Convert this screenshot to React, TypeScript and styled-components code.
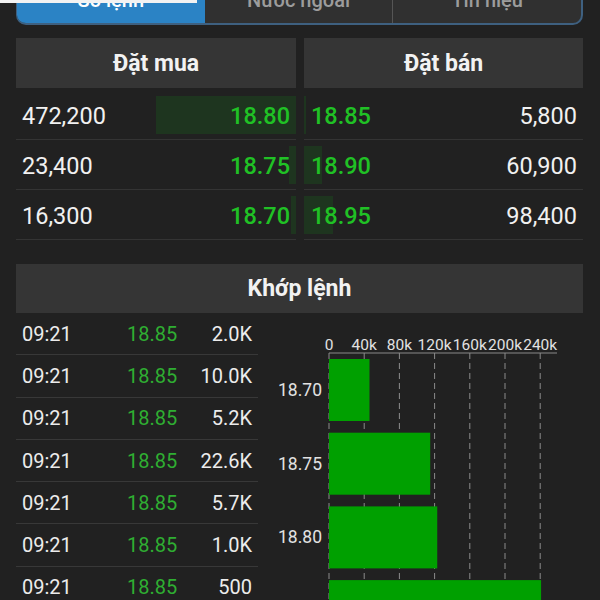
import React from "react";
import styled, { createGlobalStyle } from "styled-components";

const GlobalStyle = createGlobalStyle`
  html, body {
    margin: 0;
    padding: 0;
    background: #212121;
  }
  body {
    font-family: Roboto, "Noto Sans", "Liberation Sans", sans-serif;
    color: #eeeeee;
  }
  * { box-sizing: border-box; }
`;

const Page = styled.div`
  position: relative;
  width: 600px;
  height: 600px;
  overflow: hidden;
  padding: 0 17px 0 16px;
  display: flex;
  flex-direction: column;
  background: #212121;
`;

const TopProgress = styled.div`
  position: absolute;
  top: 0;
  left: 0;
  width: 197px;
  height: 3px;
  background: #f2f2f2;
  z-index: 3;
`;

const TabBar = styled.div`
  margin-top: -25px;
  height: 50px;
  flex-shrink: 0;
  display: flex;
  background: #303030;
  border: 2px solid #3e6080;
  border-top: none;
  border-left-width: 1px;
  border-radius: 0 0 10px 10px;
  overflow: hidden;
`;

const Tab = styled.div<{ $active?: boolean; $divider?: boolean }>`
  flex: 1;
  display: flex;
  align-items: center;
  justify-content: center;
  padding-top: 2px;
  font-size: 20px;
  font-weight: 500;
  color: ${(p) => (p.$active ? "#ffffff" : "#9c9c9c")};
  background: ${(p) => (p.$active ? "#2b83c5" : "transparent")};
  border-left: ${(p) => (p.$divider ? "1px solid #555" : "none")};
`;

const OrderBook = styled.div`
  margin-top: 13px;
  display: grid;
  grid-template-columns: 280px 1fr;
  column-gap: 8px;
  flex-shrink: 0;
`;

const BookColumn = styled.div`
  display: flex;
  flex-direction: column;
`;

const SectionHeader = styled.div<{ $height?: number }>`
  height: ${(p) => p.$height ?? 50}px;
  flex-shrink: 0;
  display: flex;
  align-items: center;
  justify-content: center;
  background: #353535;
  color: #f2f2f2;
  font-size: 23px;
  font-weight: 700;
`;

const BookRows = styled.div`
  margin-top: 2px;
  display: flex;
  flex-direction: column;
`;

const BookRow = styled.div<{ $side: "buy" | "sell" }>`
  position: relative;
  height: 50px;
  display: flex;
  align-items: center;
  justify-content: space-between;
  padding: ${(p) => (p.$side === "buy" ? "2px 6px 0 6px" : "2px 6px 0 7px")};
  border-bottom: 1px solid #343434;
  font-size: 23.5px;
`;

const DepthBar = styled.div<{ $side: "buy" | "sell" }>`
  position: absolute;
  top: 6px;
  bottom: 5px;
  ${(p) => (p.$side === "buy" ? "right: 0;" : "left: 0;")}
  background: #1e351f;
  z-index: 0;
`;

const Volume = styled.span`
  position: relative;
  z-index: 1;
  color: #f1f1f1;
  font-weight: 400;
`;

const Price = styled.span`
  position: relative;
  z-index: 1;
  color: #20c125;
  font-weight: 500;
`;

const MatchSection = styled.div`
  margin-top: 24px;
  display: flex;
  flex-direction: column;
  flex: 1;
  min-height: 0;
`;

const MatchBody = styled.div`
  display: flex;
  flex: 1;
  min-height: 0;
`;

const TradeList = styled.div`
  width: 242px;
  flex-shrink: 0;
  display: flex;
  flex-direction: column;
`;

const TradeRow = styled.div`
  height: 42.3px;
  flex-shrink: 0;
  display: grid;
  grid-template-columns: 105px auto 1fr;
  align-items: center;
  padding: 0 6px 0 6px;
  border-bottom: 1px solid #383838;
  font-size: 20px;
`;

const TradeTime = styled.span`
  color: #ececec;
`;

const TradePrice = styled.span`
  color: #2fae32;
`;

const TradeVol = styled.span`
  color: #ececec;
  text-align: right;
`;

const ChartSvg = styled.svg`
  display: block;
  flex-shrink: 0;
  font-family: Roboto, "Noto Sans", sans-serif;
`;

const buys = [
  { vol: 472200, price: "18.80" },
  { vol: 23400, price: "18.75" },
  { vol: 16300, price: "18.70" },
];
const sells = [
  { vol: 5800, price: "18.85" },
  { vol: 60900, price: "18.90" },
  { vol: 98400, price: "18.95" },
];
const maxVol = Math.max(...buys.map((b) => b.vol), ...sells.map((s) => s.vol));

const trades = [
  { t: "09:21", p: "18.85", v: "2.0K" },
  { t: "09:21", p: "18.85", v: "10.0K" },
  { t: "09:21", p: "18.85", v: "5.2K" },
  { t: "09:21", p: "18.85", v: "22.6K" },
  { t: "09:21", p: "18.85", v: "5.7K" },
  { t: "09:21", p: "18.85", v: "1.0K" },
  { t: "09:21", p: "18.85", v: "500" },
];

const chartBars = [
  { label: "18.70", vol: 46000 },
  { label: "18.75", vol: 115000 },
  { label: "18.80", vol: 123000 },
  { label: "18.85", vol: 241000 },
];

const fmt = (n: number) => n.toLocaleString("en-US");

function VolumeChart() {
  const x0 = 71;
  const step = 35.2;
  const pxPerUnit = step / 40000;
  const axisY = 40;
  const ticks = [0, 40, 80, 120, 160, 200, 240];
  const bandTop = 46;
  const band = 73.7;
  const barH = 62;
  return (
    <ChartSvg width={325} height={300} viewBox="0 0 325 300">
      {ticks.map((t, i) => (
        <text
          key={`l${t}`}
          x={x0 + i * step}
          y={37}
          fill="#e2e2e2"
          fontSize={15.5}
          textAnchor="middle"
        >
          {t === 0 ? "0" : `${t}k`}
        </text>
      ))}
      <line x1={x0} y1={axisY} x2={x0 + 228} y2={axisY} stroke="#8a8a8a" strokeWidth={1} />
      {ticks.map((t, i) => (
        <line
          key={`g${t}`}
          x1={x0 + i * step}
          y1={axisY}
          x2={x0 + i * step}
          y2={300}
          stroke="#8c8c8c"
          strokeWidth={1}
          strokeDasharray="6 4"
        />
      ))}
      {chartBars.map((b, i) => {
        const y = bandTop + i * band;
        return (
          <g key={b.label}>
            <rect x={x0} y={y} width={b.vol * pxPerUnit} height={barH} fill="#00a000" />
            <text
              x={64}
              y={y + barH / 2 + 6}
              fill="#e2e2e2"
              fontSize={17.5}
              textAnchor="end"
            >
              {b.label}
            </text>
          </g>
        );
      })}
    </ChartSvg>
  );
}

export default function App() {
  return (
    <>
      <GlobalStyle />
      <Page>
        <TopProgress />
        <TabBar>
          <Tab $active>Sổ lệnh</Tab>
          <Tab>Nước ngoài</Tab>
          <Tab $divider>Tín hiệu</Tab>
        </TabBar>

        <OrderBook>
          <BookColumn>
            <SectionHeader>Đặt mua</SectionHeader>
            <BookRows>
              {buys.map((b) => (
                <BookRow key={b.price} $side="buy">
                  <DepthBar $side="buy" style={{ width: `${(b.vol / maxVol) * 50}%` }} />
                  <Volume>{fmt(b.vol)}</Volume>
                  <Price>{b.price}</Price>
                </BookRow>
              ))}
            </BookRows>
          </BookColumn>
          <BookColumn>
            <SectionHeader>Đặt bán</SectionHeader>
            <BookRows>
              {sells.map((s) => (
                <BookRow key={s.price} $side="sell">
                  <DepthBar $side="sell" style={{ width: `${(s.vol / maxVol) * 50}%` }} />
                  <Price>{s.price}</Price>
                  <Volume>{fmt(s.vol)}</Volume>
                </BookRow>
              ))}
            </BookRows>
          </BookColumn>
        </OrderBook>

        <MatchSection>
          <SectionHeader $height={49}>Khớp lệnh</SectionHeader>
          <MatchBody>
            <TradeList>
              {trades.map((t, i) => (
                <TradeRow key={i}>
                  <TradeTime>{t.t}</TradeTime>
                  <TradePrice>{t.p}</TradePrice>
                  <TradeVol>{t.v}</TradeVol>
                </TradeRow>
              ))}
            </TradeList>
            <VolumeChart />
          </MatchBody>
        </MatchSection>
      </Page>
    </>
  );
}
